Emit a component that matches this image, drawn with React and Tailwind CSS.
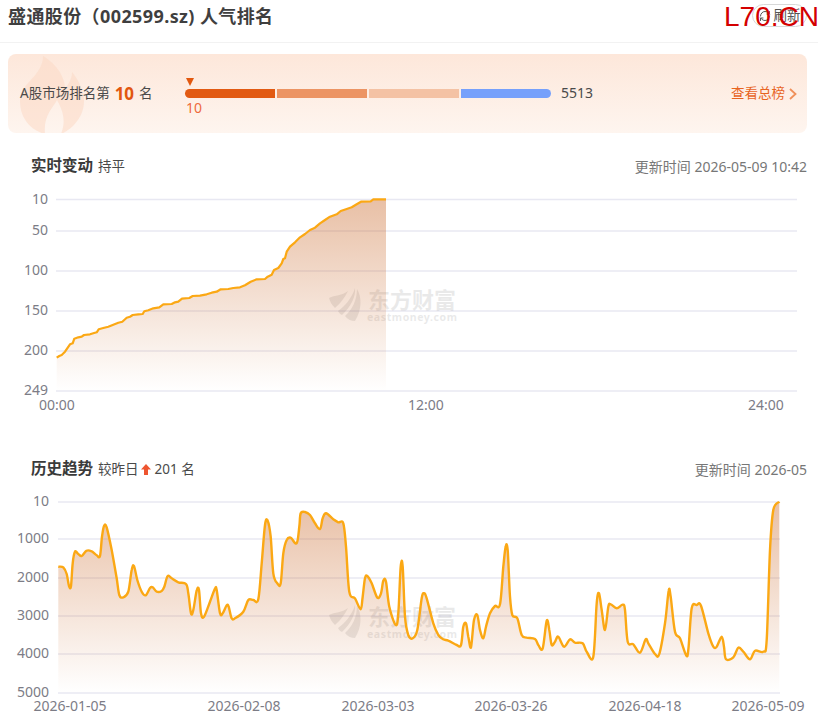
import { RefreshCw } from "lucide-react";

const font = '"Noto Sans", "Noto Sans CJK SC", sans-serif';

// traced from the reference, in 3x crop coordinates
const liveTrace = [
  [170, 533], [178, 528], [185, 525], [195, 515], [210, 493], [218, 490], [223, 476], [235, 472], [245, 470], [252, 465],
  [270, 463], [280, 460], [290, 457], [296, 448], [310, 444], [325, 440], [340, 434], [355, 428], [367, 425], [380, 413],
  [390, 410], [398, 405], [415, 403], [428, 402], [433, 394], [445, 391], [460, 385], [478, 382], [490, 373], [515, 372],
  [525, 367], [535, 365], [546, 356], [568, 354], [578, 348], [600, 347], [620, 343], [635, 338], [650, 335], [662, 328],
  [685, 327], [700, 324], [720, 322], [735, 316], [752, 305], [770, 298], [795, 297], [803, 290], [815, 284], [822, 270],
  [835, 264], [845, 250], [850, 237], [855, 235], [860, 215], [870, 200], [885, 187], [900, 172], [915, 162], [930, 150],
  [945, 143], [960, 130], [975, 120], [990, 110], [1010, 103], [1022, 93], [1040, 87], [1055, 82], [1070, 73], [1083, 65],
  [1112, 64], [1120, 58], [1158, 58],
];

const historyA = [
  [175, 350], [190, 352], [200, 372], [207, 408], [213, 408], [218, 340], [225, 305], [235, 312], [245, 318], [260, 302],
  [275, 304], [290, 316], [300, 318], [306, 260], [312, 228], [320, 232], [335, 300], [350, 385], [358, 435], [370, 442],
  [385, 425], [395, 360], [402, 348], [412, 390], [425, 425], [437, 436], [450, 414], [458, 412], [470, 425], [485, 423],
  [493, 410], [503, 378], [515, 385], [535, 397], [558, 402], [565, 430], [573, 490], [580, 480], [590, 422], [597, 420],
  [603, 490], [612, 500], [630, 455], [645, 416], [650, 420], [660, 490], [668, 490], [680, 466], [686, 470], [695, 505],
  [705, 505], [730, 485], [745, 450], [760, 450], [775, 448], [785, 340], [795, 225], [803, 212], [812, 260],
];
const historyB = [
  [10, 370], [22, 400], [32, 400], [40, 310], [50, 270], [62, 263], [80, 280], [88, 230], [92, 190], [105, 186],
  [120, 195], [135, 220], [150, 237], [158, 205], [168, 190], [190, 208], [205, 217], [220, 220], [228, 290], [238, 425],
  [255, 445], [272, 478], [278, 440], [285, 385], [292, 378], [305, 400], [322, 443], [333, 430], [340, 392], [348, 395],
  [358, 470], [377, 525], [385, 490], [392, 350], [398, 350], [405, 500], [415, 555], [428, 565], [442, 540], [455, 445],
  [462, 430], [470, 445], [490, 520], [505, 555], [520, 568], [535, 572], [560, 585], [573, 585], [580, 530], [588, 520],
  [595, 560], [603, 592], [612, 510], [622, 495], [630, 540], [640, 565], [648, 530], [660, 490], [675, 468], [690, 463],
  [700, 350], [707, 290], [713, 300], [720, 440], [727, 495], [742, 505], [755, 555], [770, 563], [795, 567], [805, 585],
];
const historyC = [
  [8, 595], [20, 512], [28, 540], [35, 585], [45, 575], [55, 560], [72, 590], [90, 568], [105, 578], [128, 580],
  [140, 605], [160, 620], [170, 460], [177, 430], [185, 480], [195, 540], [205, 470], [212, 463], [230, 475], [248, 464],
  [255, 480], [263, 575], [280, 583], [300, 608], [317, 568], [325, 580], [345, 612], [358, 612], [375, 520], [386, 422],
  [392, 440], [405, 545], [420, 565], [438, 615], [445, 600], [455, 475], [470, 465], [483, 467], [505, 550], [520, 590],
  [530, 590], [545, 560], [552, 590], [558, 628], [580, 622], [595, 593], [610, 605], [630, 628], [645, 602], [670, 605],
  [680, 570], [690, 300], [700, 180], [718, 155],
];

// chart svgs start at y=185 and y=490 on the page
const livePoints = liveTrace.map(([x, y]) => [x / 3, y / 3 - 5]);
const historyPoints = [
  ...historyA.map(([x, y]) => [x / 3, y / 3 - 40]),
  ...historyB.map(([x, y]) => [270 + x / 3, y / 3 - 40]),
  ...historyC.map(([x, y]) => [540 + x / 3, y / 3 - 40]),
];

const straight = (pts) => pts.map(([x, y], i) => `${i ? "L" : "M"}${x.toFixed(1)} ${y.toFixed(1)}`).join(" ");

const smooth = (pts) => {
  let d = `M${pts[0][0].toFixed(1)} ${pts[0][1].toFixed(1)}`;
  for (let i = 0; i < pts.length - 1; i++) {
    const p0 = pts[i - 1] || pts[i];
    const p1 = pts[i];
    const p2 = pts[i + 1];
    const p3 = pts[i + 2] || p2;
    const c1 = [p1[0] + (p2[0] - p0[0]) / 6, p1[1] + (p2[1] - p0[1]) / 6];
    const c2 = [p2[0] - (p3[0] - p1[0]) / 6, p2[1] - (p3[1] - p1[1]) / 6];
    d += ` C${c1[0].toFixed(1)} ${c1[1].toFixed(1)} ${c2[0].toFixed(1)} ${c2[1].toFixed(1)} ${p2[0].toFixed(1)} ${p2[1].toFixed(1)}`;
  }
  return d;
};

const Watermark = ({ x, y }) => (
  <g transform={`translate(${x} ${y})`} opacity="0.12" fill="#555">
    <path d="M0 10 C6 7 13 8 19 3 C16 9 11 16 6 20 C3 17 1 14 0 10 Z" />
    <path d="M9 23 C16 18 23 10 26 0 C27 8 22 19 13 27 C11 26 10 25 9 23 Z" />
    <path d="M28 1 C33 9 33 22 26 33 C22 33 18 31 16 28 C23 22 28 12 28 1 Z" />
    <text x="39" y="20" fontSize="22" fontWeight="700" fontFamily='"Noto Sans CJK SC", sans-serif'>东方财富</text>
    <text x="38" y="33" fontSize="10.5" fontWeight="700" fontFamily='"Noto Sans", sans-serif' textLength="90">eastmoney.com</text>
  </g>
);

const Chart = ({ id, height, points, path, baseY, grid, gridFrom, gridTo, labelX, xLabels, xLabelY, mark, areaTop, lineWidth }) => {
  const first = points[0];
  const last = points[points.length - 1];
  return (
    <svg width="820" height={height} viewBox={`0 0 820 ${height}`} className="block" style={{ fontFamily: font }}>
      <defs>
        <linearGradient id={id} x1="0" y1={areaTop} x2="0" y2={baseY} gradientUnits="userSpaceOnUse">
          <stop offset="0" stopColor="#c9682a" stopOpacity="0.42" />
          <stop offset="1" stopColor="#c9682a" stopOpacity="0" />
        </linearGradient>
      </defs>
      {grid.map(([label, y]) => (
        <g key={label}>
          <line x1={gridFrom} x2={gridTo} y1={y} y2={y} stroke="#e8e8f2" strokeWidth="1.3" />
          <text x={labelX} y={y + 4} textAnchor="end" fontSize="14" fill="#7c7c86">{label}</text>
        </g>
      ))}
      <Watermark x={mark[0]} y={mark[1]} />
      <path d={`${path} L${last[0].toFixed(1)} ${baseY} L${first[0].toFixed(1)} ${baseY} Z`} fill={`url(#${id})`} />
      <path d={path} fill="none" stroke="#fba814" strokeWidth={lineWidth} strokeLinejoin="round" />
      {xLabels.map(([label, x]) => (
        <text key={label} x={x} y={xLabelY} textAnchor="middle" fontSize="14" fill="#7c7c86">{label}</text>
      ))}
    </svg>
  );
};

const SectionHead = ({ title, children, updated }) => (
  <div className="flex h-[26px] items-center justify-between pl-[31px] pr-[13px]">
    <div className="flex items-center">
      <span className="text-[15.5px] font-bold text-[#3a3a3a]">{title}</span>
      {children}
    </div>
    <span className="text-[14px] text-[#777777]">{updated}</span>
  </div>
);

export default function App() {
  return (
    <div className="relative h-[717px] w-[820px] overflow-hidden bg-white" style={{ fontFamily: font }}>
      <header className="flex h-[43px] w-[818px] items-start justify-between border-b border-[#f2f2f2] pl-2 pr-[11px] pt-1">
        <h1 className="text-[18px] font-bold leading-[24px] tracking-[0.4px] text-[#3f3f3f]">盛通股份（002599.sz) 人气排名</h1>
        <button type="button" className="flex h-[23px] w-[55px] items-center justify-center gap-[3px] rounded-full border border-[#d8d8d8] text-[13.5px] text-[#555555]">
          <RefreshCw size={12} />
          刷新
        </button>
      </header>

      <section className="relative ml-2 mt-[11px] flex h-[79px] w-[799px] items-center overflow-hidden rounded-lg bg-gradient-to-b from-[#fde7da] to-[#fef5ef]">
        <svg width="66" height="78" viewBox="0 0 66 78" className="absolute left-[11px] top-[2px]">
          <path fill="#fbd9c5" fillOpacity="0.55" d="M24 0 C38 8 46 22 46 32 C50 28 53 22 53 16 C61 26 65 36 65 45 C65 62 52 74 42 78 C46 68 46 58 38 44 C34 52 24 60 26 78 C10 74 1 60 1 46 C1 32 11 26 17 18 C20 14 24 8 24 0 Z" />
        </svg>
        <div className="relative ml-3 flex w-[165px] items-center text-[13.5px] text-[#4a4a4a]">
          A股市场排名第
          <span className="mx-[5px] text-[17px] font-bold text-[#e2560f]">10</span>
          名
        </div>
        <div className="relative flex flex-col pt-2">
          <div className="ml-[1px] h-0 w-0 border-x-[4.5px] border-t-[8px] border-x-transparent border-t-[#e2580f]" />
          <div className="mt-[3px] flex h-[9px] w-[366px] gap-[2px]">
            <div className="flex-1 rounded-l-full bg-[#e25a12]" />
            <div className="flex-1 bg-[#ec9463]" />
            <div className="flex-1 bg-[#f4c2a4]" />
            <div className="flex-1 rounded-r-full bg-[#76a0fb]" />
          </div>
          <div className="ml-[1px] text-[14px] leading-[20px] text-[#ee6a3c]">10</div>
        </div>
        <span className="relative ml-[10px] -mt-[2px] text-[14px] text-[#4a4a4a]">5513</span>
        <a className="relative ml-auto mr-[10px] flex items-center gap-1 text-[13.5px] text-[#e8641f]">
          查看总榜
          <svg width="8" height="12" viewBox="0 0 8 12">
            <path d="M1 1 L6.5 6 L1 11" fill="none" stroke="#f0905a" strokeWidth="1.8" />
          </svg>
        </a>
      </section>

      <div className="mb-[6px] mt-5">
        <SectionHead title="实时变动" updated="更新时间 2026-05-09 10:42">
          <span className="ml-[5px] text-[13.5px] text-[#4a4a4a]">持平</span>
        </SectionHead>
      </div>
      <Chart
        id="liveArea"
        height={235}
        points={livePoints}
        path={straight(livePoints)}
        areaTop={14}
        baseY={206}
        gridFrom={56}
        gridTo={797}
        labelX={48}
        grid={[["10", 14.5], ["50", 46], ["100", 86], ["150", 126], ["200", 166], ["249", 206]]}
        xLabels={[["00:00", 57], ["12:00", 426], ["24:00", 766]]}
        xLabelY={225}
        mark={[329, 103]}
        lineWidth={2.2}
      />

      <div className="mb-2 mt-9">
        <SectionHead title="历史趋势" updated="更新时间 2026-05">
          <span className="ml-[5px] flex items-center text-[13.5px] text-[#4a4a4a]">
            较昨日
            <svg width="10" height="11" viewBox="0 0 10 11" className="ml-[2px] mr-1">
              <path fill="#ee5530" d="M5 0 L10 5.5 H7 V11 H3 V5.5 H0 Z" />
            </svg>
            201 名
          </span>
        </SectionHead>
      </div>
      <Chart
        id="historyArea"
        height={230}
        points={historyPoints}
        path={smooth(historyPoints)}
        areaTop={12}
        baseY={203}
        gridFrom={58}
        gridTo={780}
        labelX={49}
        grid={[["10", 12], ["1000", 49], ["2000", 88], ["3000", 126], ["4000", 164], ["5000", 203]]}
        xLabels={[["2026-01-05", 70], ["2026-02-08", 244], ["2026-03-03", 378], ["2026-03-26", 511], ["2026-04-18", 645], ["2026-05-09", 768]]}
        xLabelY={221}
        mark={[329, 115]}
        lineWidth={2.4}
      />

      <div className="absolute left-[724px] top-[-1px] text-[28px] leading-[36px] text-[#d40000]" style={{ fontFamily: '"Liberation Sans", sans-serif' }}>
        L70.CN
      </div>
    </div>
  );
}
